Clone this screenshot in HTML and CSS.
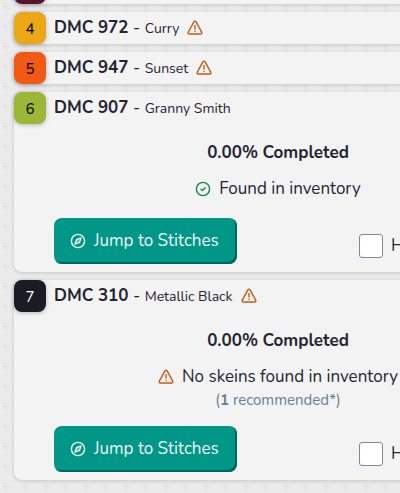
FILE: index.html
```html
<!DOCTYPE html>
<html lang="en">
<head>
    <meta charset="UTF-8">
    <title>Threads</title>
    <link rel="stylesheet" href="styles.css">
</head>
<body>
<svg class="sprite" aria-hidden="true">
    <symbol id="warning" viewBox="0 0 16 16">
        <path d="M6.900 1.900Q8 .5 9.100 1.900L14.700 12.200Q15.300 14 13.500 14H2.500Q.7 14 1.300 12.200Z"/>
        <path d="M8 5.500V9M8 11.200V11.500"/>
    </symbol>
    <symbol id="compass" viewBox="0 0 16 16">
        <circle cx="8" cy="8" r="6.600"/>
        <path d="M11 5L9.400 9.400L5 11L6.600 6.600Z"/>
        <path d="M8 8V8.100"/>
    </symbol>
    <symbol id="check" viewBox="0 0 16 16">
        <circle cx="8" cy="8" r="6.600"/>
        <path d="M6 8.200L7.500 9.500L10.200 6.800"/>
    </symbol>
</svg>
<ul class="threads">
    <li class="thread">
        <div class="head"><span class="swatch garnet"></span></div>
    </li>
    <li class="thread">
        <div class="head">
            <span class="swatch curry">4</span>
            <h2>DMC 972 <span>- <small>Curry</small></span></h2>
            <svg class="icon warn"><use href="#warning"/></svg>
        </div>
    </li>
    <li class="thread">
        <div class="head">
            <span class="swatch sunset">5</span>
            <h2>DMC 947 <span>- <small>Sunset</small></span></h2>
            <svg class="icon warn"><use href="#warning"/></svg>
        </div>
    </li>
    <li class="thread">
        <div class="head">
            <span class="swatch granny">6</span>
            <h2>DMC 907 <span>- <small>Granny Smith</small></span></h2>
        </div>
        <div class="detail">
            <p class="line"><strong>0.00% Completed</strong></p>
            <p class="line stock"><svg class="icon ok"><use href="#check"/></svg>Found in inventory</p>
            <div class="actions">
                <button type="button" class="jump"><svg class="icon"><use href="#compass"/></svg>Jump to Stitches</button>
                <label class="toggle" for="toggle907"><input type="checkbox" id="toggle907">H</label>
            </div>
        </div>
    </li>
    <li class="thread">
        <div class="head">
            <span class="swatch black">7</span>
            <h2>DMC 310 <span>- <small>Metallic Black</small></span></h2>
            <svg class="icon warn"><use href="#warning"/></svg>
        </div>
        <div class="detail">
            <p class="line"><strong>0.00% Completed</strong></p>
            <p class="line stock"><svg class="icon warn"><use href="#warning"/></svg>No skeins found in inventory</p>
            <p class="note">(<b>1</b> recommended*)</p>
            <div class="actions">
                <button type="button" class="jump"><svg class="icon"><use href="#compass"/></svg>Jump to Stitches</button>
                <label class="toggle" for="toggle310"><input type="checkbox" id="toggle310">H</label>
            </div>
        </div>
    </li>
</ul>
</body>
</html>
```

FILE: styles.css
```css
*{
    margin: 0;
    padding: 0;
    box-sizing: border-box;
}
body{
    overflow: hidden;
    font: 17px/26px Nunito, Mulish, "Open Sans", sans-serif;
    color: #252531;
    background: #ebebeb url("data:image/svg+xml,%3Csvg xmlns='http://www.w3.org/2000/svg' width='20' height='20'%3E%3Cpath d='M2 6.500h7M5.500 3v7' stroke='%23e0e0e0'/%3E%3C/svg%3E");
}
.sprite{
    display: none;
}
.threads{
    list-style: none;
    min-width: 556px;
    margin-top: -28px;
    padding: 0 14px 12px;
    display: flex;
    flex-direction: column;
    gap: 8px;
}
.thread{
    background: #f3f3f3;
    border-radius: 8px;
    box-shadow: 0 1px 4px rgba(0,0,0,.16);
}
.head{
    display: flex;
    align-items: center;
    gap: 8px;
    height: 32px;
}
.head h2{
    font-size: 17px;
    font-weight: 700;
}
.head h2 span{
    font-weight: 400;
}
.head small{
    font-size: 14px;
}
.swatch{
    width: 32px;
    height: 32px;
    border-radius: 8px;
    font-size: 15px;
    line-height: 34px;
    text-align: center;
    color: #000;
    box-shadow: 0 1px 4px rgba(0,0,0,.25);
}
.garnet{
    background: #57142c;
}
.curry{
    background: #eca716;
}
.sunset{
    background: #f25a13;
}
.granny{
    background: #9bb735;
}
.black{
    background: #1b1b23;
    color: #fff;
}
.icon{
    width: 16px;
    height: 16px;
    flex: none;
    fill: none;
    stroke: currentColor;
    stroke-width: 1.4;
    stroke-linecap: round;
    stroke-linejoin: round;
}
.warn{
    color: #c55a17;
}
.ok{
    color: #138a43;
}
.detail{
    padding: 16px 40px 8px;
    text-align: center;
}
.stock{
    display: flex;
    align-items: center;
    justify-content: center;
    gap: 8px;
    margin-top: 10px;
}
.note{
    font-size: 15px;
    line-height: 20px;
    color: #6b7f92;
}
.actions{
    display: grid;
    grid-template-columns: 1fr 143px;
    align-items: center;
    margin-top: 16px;
}
.jump{
    display: flex;
    align-items: center;
    justify-self: start;
    gap: 8px;
    height: 46px;
    padding: 0 18px 0 16px;
    border: 0;
    border-radius: 8px;
    background: #009688;
    box-shadow: inset -2px -2px 0 #00665f;
    color: #f3f3f3;
    font: inherit;
}
.toggle{
    display: flex;
    align-items: center;
    gap: 8px;
    padding-top: 10px;
}
.toggle input{
    appearance: none;
    width: 24px;
    height: 24px;
    border: 1px solid #85859a;
    border-radius: 3px;
    background: #fff;
}
```
